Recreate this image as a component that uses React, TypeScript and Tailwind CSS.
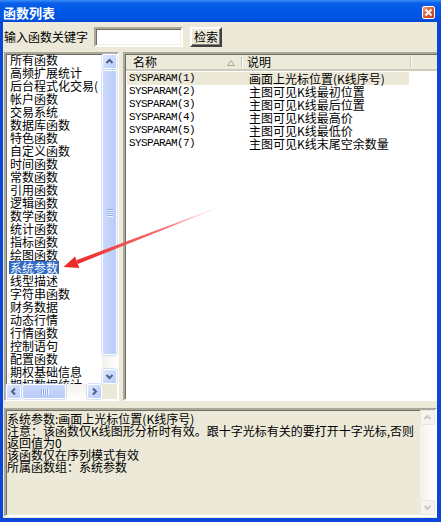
import React from "react";

const CJK = "font-['Noto_Sans_CJK_SC','DejaVu_Sans',sans-serif]";
const MONO = "font-['Liberation_Mono',monospace]";

type Dir = "up" | "down" | "left" | "right";

function Chevron({ dir, color }: { dir: Dir; color: string }) {
  const d: Record<Dir, string> = {
    up: "M1.5 6 L4.5 3 L7.5 6",
    down: "M1.5 3 L4.5 6 L7.5 3",
    left: "M6 1.5 L3 4.5 L6 7.5",
    right: "M3 1.5 L6 4.5 L3 7.5",
  };
  return (
    <svg width="9" height="9" viewBox="0 0 9 9">
      <path d={d[dir]} fill="none" stroke={color} strokeWidth="2" />
    </svg>
  );
}

function BlueBtn({ dir }: { dir: Dir }) {
  return (
    <div className="w-[15px] h-[15px] shrink-0 flex items-center justify-center rounded-[2px] border border-white bg-[linear-gradient(135deg,#DCE7FE,#B8CCFA)] shadow-[0_0_0_0.5px_#B2C6F3]">
      <Chevron dir={dir} color="#4D6185" />
    </div>
  );
}

function GrayBtn({ dir }: { dir: Dir }) {
  return (
    <div className="w-[15px] h-[15px] shrink-0 flex items-center justify-center rounded-[2px] border border-[#E8E7E1] bg-[#F5F4EF]">
      <Chevron dir={dir} color="#CAC9C1" />
    </div>
  );
}

function Grip({ vertical }: { vertical: boolean }) {
  if (vertical) {
    return (
      <div className="flex flex-col gap-[1px]">
        {[0, 1, 2, 3].map((i) => (
          <div key={i} className="w-[6px] h-[1px] bg-[#8FAEEB] shadow-[0_1px_0_#EEF3FF]" />
        ))}
      </div>
    );
  }
  return (
    <div className="flex flex-row gap-[1px]">
      {[0, 1, 2, 3].map((i) => (
        <div key={i} className="h-[6px] w-[1px] bg-[#8FAEEB] shadow-[1px_0_0_#EEF3FF]" />
      ))}
    </div>
  );
}

const leftItems = [
  "所有函数",
  "高频扩展统计",
  "后台程式化交易(",
  "帐户函数",
  "交易系统",
  "数据库函数",
  "特色函数",
  "自定义函数",
  "时间函数",
  "常数函数",
  "引用函数",
  "逻辑函数",
  "数学函数",
  "统计函数",
  "指标函数",
  "绘图函数",
  "系统参数",
  "线型描述",
  "字符串函数",
  "财务数据",
  "动态行情",
  "行情函数",
  "控制语句",
  "配置函数",
  "期权基础信息",
  "期权数据统计",
];

const rows = [
  ["SYSPARAM(1)", "画面上光标位置(K线序号)"],
  ["SYSPARAM(2)", "主图可见K线最初位置"],
  ["SYSPARAM(3)", "主图可见K线最后位置"],
  ["SYSPARAM(4)", "主图可见K线最高价"],
  ["SYSPARAM(5)", "主图可见K线最低价"],
  ["SYSPARAM(7)", "主图可见K线末尾空余数量"],
];

const infoLines = [
  "系统参数:画面上光标位置(K线序号)",
  "注意：该函数仅K线图形分析时有效。跟十字光标有关的要打开十字光标,否则",
  "返回值为0",
  "该函数仅在序列模式有效",
  "所属函数组：系统参数",
];

const sunken =
  "border-2 border-t-[#ACA899] border-l-[#ACA899] border-b-white border-r-white shadow-[inset_1px_1px_0_#716F64,inset_-1px_-1px_0_#F1EFE2]";

export default function App() {
  return (
    <div className="w-[441px] h-[522px] relative flex flex-col bg-[#0A46D8] overflow-hidden select-none">
      {/* Title bar */}
      <div className="h-[22px] shrink-0 flex items-start justify-between bg-[linear-gradient(to_bottom,#3A8DF7_0%,#0B5FE9_14%,#0058E7_45%,#0054E3_80%,#0049D6_100%)]">
        <span className={`${CJK} text-[13px] leading-[13px] font-bold text-white ml-[3px] mt-[6px]`}>
          函数列表
        </span>
        <div className="mt-[6px] mr-[6px] w-[13px] h-[13px] rounded-[2px] border border-white bg-[linear-gradient(135deg,#EE9B7E,#D65631_55%,#C23E1A)] flex items-center justify-center">
          <svg width="9" height="9" viewBox="0 0 9 9">
            <path d="M1.5 1.5 L7.5 7.5 M7.5 1.5 L1.5 7.5" stroke="white" strokeWidth="1.8" />
          </svg>
        </div>
      </div>

      {/* Body */}
      <div className="flex-1 ml-[3px] mr-[4px] mb-[4px] bg-[#ECE9D8] flex flex-col pl-[1px] pb-[1px]">
        {/* Search row */}
        <div className="flex items-center h-[20px] mt-[5px]">
          <span className={`${CJK} text-[12px] leading-[20px] text-black w-[90px] whitespace-nowrap`}>
            输入函数关键字
          </span>
          <div className={`w-[89px] h-[20px] bg-white ${sunken}`} />
          <div
            className={`${CJK} ml-[7px] w-[32px] h-[20px] flex items-center justify-center text-[12px] text-black border-2 border-t-white border-l-white border-b-[#404040] border-r-[#404040] shadow-[inset_-1px_-1px_0_#808080]`}
          >
            检索
          </div>
        </div>

        {/* Main area */}
        <div className="flex mt-[5px] h-[349px]">
          {/* Left list */}
          <div className={`w-[115px] bg-white flex flex-col ${sunken}`}>
            <div className="flex flex-1 min-h-0">
              <div className="flex-1 overflow-hidden pl-[3px]">
                <div className="mt-[-1px]">
                  {leftItems.map((t) => (
                    <div key={t} className="h-[13px] flex">
                      <span
                        className={`${CJK} text-[12px] leading-[13px] whitespace-nowrap px-[1px] ${
                          t === "系统参数" ? "bg-[#316AC5] text-white" : "text-black"
                        }`}
                      >
                        {t}
                      </span>
                    </div>
                  ))}
                </div>
              </div>
              {/* vertical scrollbar */}
              <div className="w-[15px] flex flex-col bg-[linear-gradient(to_right,#F3F1EC,#FEFEFB)]">
                <BlueBtn dir="up" />
                <div className="h-[285px] mt-[1px] rounded-[2px] border border-white bg-[linear-gradient(to_right,#CADAFD,#B9CCF8)] shadow-[0_0_0_0.5px_#A9C0F1] flex items-center justify-center">
                  <Grip vertical />
                </div>
                <div className="flex-1" />
                <BlueBtn dir="down" />
              </div>
            </div>
            {/* horizontal scrollbar */}
            <div className="flex h-[15px]">
              <div className="flex-1 flex bg-[linear-gradient(to_bottom,#F3F1EC,#FEFEFB)]">
                <BlueBtn dir="left" />
                <div className="w-[44px] ml-[1px] rounded-[2px] border border-white bg-[linear-gradient(to_bottom,#CADAFD,#B9CCF8)] shadow-[0_0_0_0.5px_#A9C0F1] flex items-center justify-center">
                  <Grip vertical={false} />
                </div>
                <div className="flex-1" />
                <BlueBtn dir="right" />
              </div>
              <div className="w-[15px] bg-[#ECE9D8]" />
            </div>
          </div>

          {/* Right panel */}
          <div className="ml-[4px] flex-1 bg-white flex flex-col border-l-2 border-t-2 border-b-2 border-t-[#ACA899] border-l-[#ACA899] border-b-white shadow-[inset_1px_1px_0_#716F64]">
            {/* header */}
            <div className="h-[16px] flex bg-[#EBEADB] border-b-[2px] border-[#D0CCBC] ml-[1px] mt-[1px]">
              <div className="w-[117px] relative flex items-center">
                <span className={`${CJK} text-[12px] leading-[12px] text-black ml-[7px]`}>名称</span>
                <svg className="absolute left-[101px] top-[5px]" width="8" height="6" viewBox="0 0 8 6">
                  <path d="M0.5 5.5 L4 0.5 L7.5 5.5 Z" fill="none" stroke="#ACA899" strokeWidth="1" />
                </svg>
                <div className="absolute right-0 top-[2px] bottom-[2px] w-[2px] border-l border-[#C7C5B2] bg-white" />
              </div>
              <div className="w-[169px] relative flex items-center">
                <span className={`${CJK} text-[12px] leading-[12px] text-black ml-[4px]`}>说明</span>
                <div className="absolute right-0 top-[2px] bottom-[2px] w-[2px] border-l border-[#C7C5B2] bg-white" />
              </div>
              <div className="flex-1" />
            </div>
            {/* rows */}
            <div className="mt-[1px] ml-[2px]">
              {rows.map(([a, b], i) => (
                <div key={a} className={`flex h-[13px] w-[282px] ${i === 0 ? "bg-[#ECE9D8]" : ""}`}>
                  <span className={`${MONO} w-[120px] pl-[2px] text-[11px] leading-[13px] tracking-[-0.6px] text-black whitespace-nowrap`}>
                    {a}
                  </span>
                  <span className={`${CJK} pl-[2px] text-[12px] leading-[13px] text-black whitespace-nowrap`}>{b}</span>
                </div>
              ))}
            </div>
          </div>
        </div>

        {/* Info text area */}
        <div className={`mt-[7px] h-[109px] flex bg-[#ECE9D8] ${sunken}`}>
          <div className="flex-1 pl-[1px] pt-[3px] overflow-hidden">
            {infoLines.map((l) => (
              <div key={l} className={`${CJK} text-[12px] leading-[12px] text-black whitespace-nowrap`}>
                {l}
              </div>
            ))}
          </div>
          <div className="w-[15px] flex flex-col bg-[linear-gradient(to_right,#F3F1EC,#FEFEFB)]">
            <GrayBtn dir="up" />
            <div className="flex-1" />
            <GrayBtn dir="down" />
          </div>
        </div>
      </div>

      {/* Red annotation arrow */}
      <svg className="absolute left-0 top-0 pointer-events-none" width="441" height="522" viewBox="0 0 441 522">
        <defs>
          <linearGradient id="arr" gradientUnits="userSpaceOnUse" x1="214" y1="209" x2="77" y2="262">
            <stop offset="0" stopColor="#FFD6D6" stopOpacity="0.6" />
            <stop offset="0.35" stopColor="#F77070" />
            <stop offset="1" stopColor="#EE2B2B" />
          </linearGradient>
        </defs>
        <polygon points="214,208.8 213.8,209.5 77.8,264 76.4,260.2" fill="url(#arr)" />
        <polygon points="63.5,267 75,256.5 79.3,268" fill="#EE2B2B" />
      </svg>
    </div>
  );
}
